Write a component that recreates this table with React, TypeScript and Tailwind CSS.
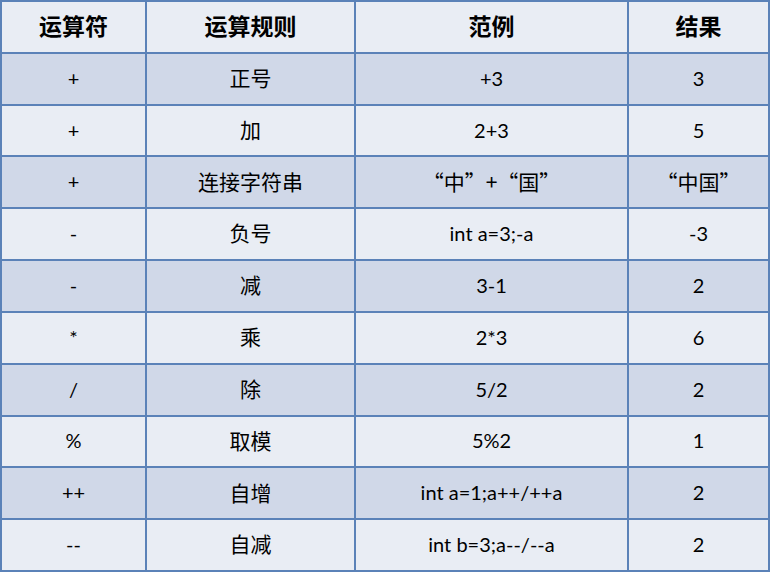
import React from "react";

type Cell = { t: string; cjk?: boolean };

const rows: Cell[][] = [
  [{ t: "+" }, { t: "正号", cjk: true }, { t: "+3" }, { t: "3" }],
  [{ t: "+" }, { t: "加", cjk: true }, { t: "2+3" }, { t: "5" }],
  [{ t: "+" }, { t: "连接字符串", cjk: true }, { t: "“中”+“国”", cjk: true }, { t: "“中国”", cjk: true }],
  [{ t: "-" }, { t: "负号", cjk: true }, { t: "int a=3;-a" }, { t: "-3" }],
  [{ t: "-" }, { t: "减", cjk: true }, { t: "3-1" }, { t: "2" }],
  [{ t: "*" }, { t: "乘", cjk: true }, { t: "2*3" }, { t: "6" }],
  [{ t: "/" }, { t: "除", cjk: true }, { t: "5/2" }, { t: "2" }],
  [{ t: "%" }, { t: "取模", cjk: true }, { t: "5%2" }, { t: "1" }],
  [{ t: "++" }, { t: "自增", cjk: true }, { t: "int a=1;a++/++a" }, { t: "2" }],
  [{ t: "--" }, { t: "自减", cjk: true }, { t: "int b=3;a--/--a" }, { t: "2" }],
];

const headers = ["运算符", "运算规则", "范例", "结果"];

export default function App() {
  return (
    <div className="w-[770px] h-[572px] bg-[#5b82b8] p-[2px] grid grid-cols-[143px_207px_271px_139px] grid-rows-[repeat(11,1fr)] gap-[2px] font-[Lato,'Noto_Sans_CJK_SC',sans-serif]">
      {headers.map((h) => (
        <div
          key={h}
          className="bg-[#e9edf4] flex items-center justify-center pb-[3px] text-[23px] font-bold text-black font-['Noto_Sans_CJK_SC',sans-serif]"
        >
          {h}
        </div>
      ))}
      {rows.map((r, i) =>
        r.map((c, j) => (
          <div
            key={i + "-" + j}
            className={
              "flex items-center justify-center pb-[2px] text-black " +
              (c.cjk ? "text-[21px] font-['Noto_Sans_CJK_SC',sans-serif] " : "text-[20px] ") +
              (i % 2 === 0 ? "bg-[#d0d8e8]" : "bg-[#e9edf4]")
            }
          >
            {c.t}
          </div>
        ))
      )}
    </div>
  );
}
